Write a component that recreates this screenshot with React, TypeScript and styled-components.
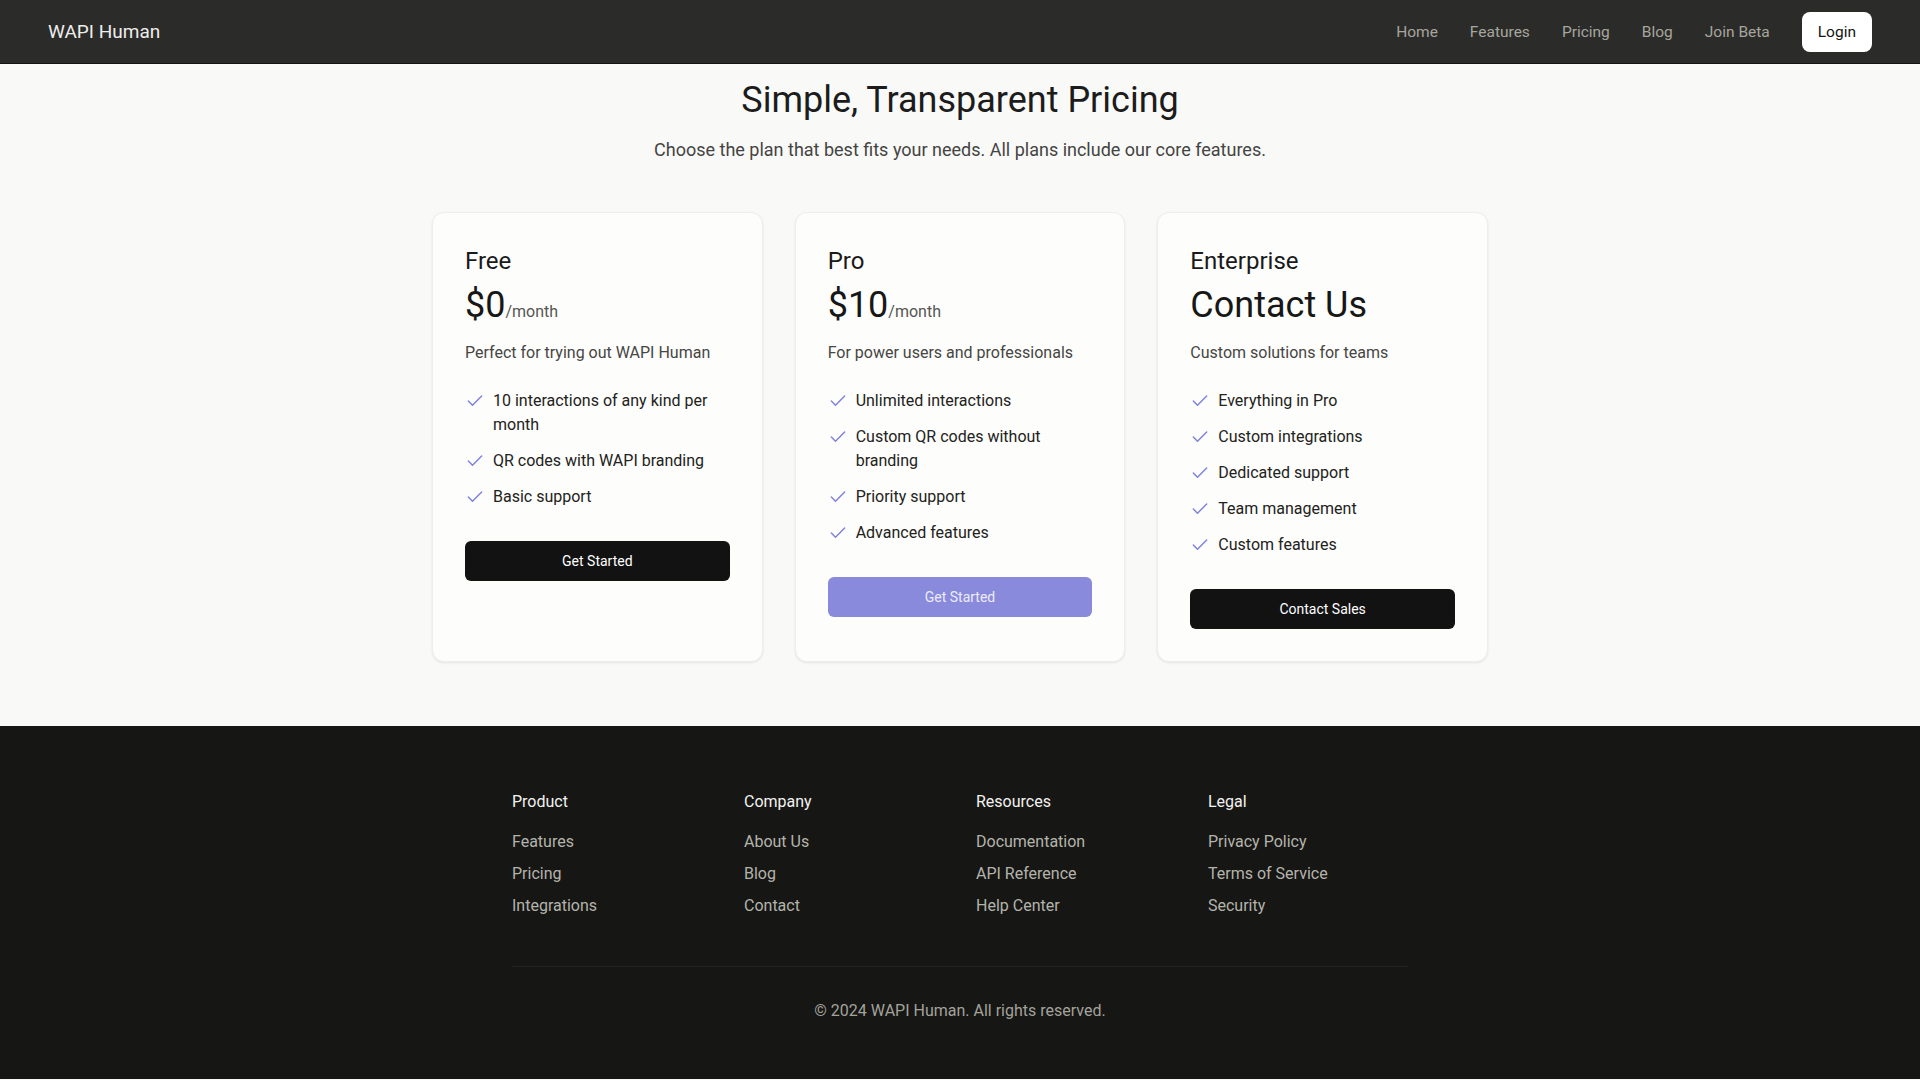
import React from "react";
import styled, { createGlobalStyle } from "styled-components";
import { Check } from "lucide-react";

const GlobalStyle = createGlobalStyle`
  * { box-sizing: border-box; }
  html, body { margin: 0; padding: 0; }
  body {
    background: #f9f9f7;
    font-family: Roboto, "Liberation Sans", Arial, sans-serif;
    color: #1a1a1a;
    -webkit-font-smoothing: antialiased;
  }
`;

const Header = styled.header`
  height: 64px;
  background: #2b2b29;
  border-bottom: 1px solid #141413;
  display: flex;
  align-items: center;
  justify-content: space-between;
  padding: 0 48px;
`;

const Logo = styled.div`
  font-size: 19px;
  color: #ededeb;
`;

const Nav = styled.nav`
  display: flex;
  align-items: center;
  gap: 32px;
`;

const NavLink = styled.a`
  font-size: 15.5px;
  color: #a6a69e;
  text-decoration: none;
`;

const LoginButton = styled.button`
  height: 40px;
  padding: 0 16px;
  border: none;
  border-radius: 8px;
  background: #ffffff;
  color: #141414;
  font-family: inherit;
  font-size: 15.5px;
`;

const Section = styled.section`
  padding: 16px 32px 64px;
`;

const Title = styled.h1`
  margin: 0;
  text-align: center;
  font-size: 36px;
  line-height: 40px;
  font-weight: 400;
  color: #1c1c1c;
`;

const Subtitle = styled.p`
  margin: 16px 0 0;
  text-align: center;
  font-size: 18px;
  line-height: 28px;
  color: #444442;
`;

const Grid = styled.div`
  max-width: 1056px;
  margin: 48px auto 0;
  display: grid;
  grid-template-columns: repeat(3, 1fr);
  gap: 32px;
`;

const Card = styled.div`
  background: #fdfdfb;
  border: 1px solid #eeeeea;
  border-radius: 12px;
  box-shadow: 0 1px 3px rgba(0, 0, 0, 0.06), 0 1px 2px rgba(0, 0, 0, 0.03);
  padding: 32px;
  display: flex;
  flex-direction: column;
`;

const PlanName = styled.h3`
  margin: 0;
  font-size: 24px;
  line-height: 32px;
  font-weight: 400;
  color: #1a1a1a;
`;

const PriceRow = styled.div`
  margin-top: 8px;
  display: flex;
  align-items: baseline;
  height: 40px;
`;

const Price = styled.span`
  font-size: 36px;
  line-height: 40px;
  color: #171717;
`;

const Per = styled.span`
  font-size: 16px;
  color: #555553;
`;

const Description = styled.p`
  margin: 16px 0 0;
  font-size: 16px;
  line-height: 24px;
  color: #464644;
`;

const FeatureList = styled.ul`
  list-style: none;
  margin: 24px 0 32px;
  padding: 0;
  display: flex;
  flex-direction: column;
  gap: 12px;
`;

const Feature = styled.li`
  display: flex;
  align-items: flex-start;
  gap: 8px;
  font-size: 16px;
  line-height: 24px;
  color: #222220;

  svg {
    flex-shrink: 0;
    margin-top: 2px;
    color: #8080e0;
  }
`;

const PlanButton = styled.button<{ $accent?: boolean }>`
  height: 40px;
  width: 100%;
  border: none;
  border-radius: 6px;
  background: ${(p) => (p.$accent ? "#8a8adc" : "#121212")};
  color: ${(p) => (p.$accent ? "#ececf8" : "#ffffff")};
  font-family: inherit;
  font-size: 14px;
`;

const Footer = styled.footer`
  background: #161614;
  padding: 64px 32px 56px;
`;

const FooterInner = styled.div`
  max-width: 896px;
  margin: 0 auto;
`;

const FooterGrid = styled.div`
  display: grid;
  grid-template-columns: repeat(4, 1fr);
  gap: 32px;
`;

const FooterCol = styled.div`
  display: flex;
  flex-direction: column;
`;

const FooterHeading = styled.h4`
  margin: 0 0 16px;
  font-size: 16px;
  line-height: 24px;
  font-weight: 400;
  color: #f2f2f0;
`;

const FooterLinks = styled.div`
  display: flex;
  flex-direction: column;
  gap: 8px;
`;

const FooterLink = styled.a`
  font-size: 16px;
  line-height: 24px;
  color: #b4b4ac;
  text-decoration: none;
`;

const Bottom = styled.div`
  margin-top: 48px;
  border-top: 1px solid #232321;
  padding-top: 32px;
  text-align: center;
  font-size: 16px;
  line-height: 24px;
  color: #a3a39c;
`;

type Plan = {
  name: string;
  price: string;
  per?: string;
  description: string;
  features: string[];
  cta: string;
  accent?: boolean;
};

const plans: Plan[] = [
  {
    name: "Free",
    price: "$0",
    per: "/month",
    description: "Perfect for trying out WAPI Human",
    features: [
      "10 interactions of any kind per month",
      "QR codes with WAPI branding",
      "Basic support",
    ],
    cta: "Get Started",
  },
  {
    name: "Pro",
    price: "$10",
    per: "/month",
    description: "For power users and professionals",
    features: [
      "Unlimited interactions",
      "Custom QR codes without branding",
      "Priority support",
      "Advanced features",
    ],
    cta: "Get Started",
    accent: true,
  },
  {
    name: "Enterprise",
    price: "Contact Us",
    description: "Custom solutions for teams",
    features: [
      "Everything in Pro",
      "Custom integrations",
      "Dedicated support",
      "Team management",
      "Custom features",
    ],
    cta: "Contact Sales",
  },
];

const footerCols = [
  { title: "Product", links: ["Features", "Pricing", "Integrations"] },
  { title: "Company", links: ["About Us", "Blog", "Contact"] },
  { title: "Resources", links: ["Documentation", "API Reference", "Help Center"] },
  { title: "Legal", links: ["Privacy Policy", "Terms of Service", "Security"] },
];

export default function App() {
  return (
    <>
      <GlobalStyle />
      <Header>
        <Logo>WAPI Human</Logo>
        <Nav>
          {["Home", "Features", "Pricing", "Blog", "Join Beta"].map((l) => (
            <NavLink key={l} href="#">
              {l}
            </NavLink>
          ))}
          <LoginButton>Login</LoginButton>
        </Nav>
      </Header>
      <Section>
        <Title>Simple, Transparent Pricing</Title>
        <Subtitle>
          Choose the plan that best fits your needs. All plans include our core features.
        </Subtitle>
        <Grid>
          {plans.map((p) => (
            <Card key={p.name}>
              <PlanName>{p.name}</PlanName>
              <PriceRow>
                <Price>{p.price}</Price>
                {p.per && <Per>{p.per}</Per>}
              </PriceRow>
              <Description>{p.description}</Description>
              <FeatureList>
                {p.features.map((f) => (
                  <Feature key={f}>
                    <Check size={20} strokeWidth={1.75} />
                    <span>{f}</span>
                  </Feature>
                ))}
              </FeatureList>
              <PlanButton $accent={p.accent}>{p.cta}</PlanButton>
            </Card>
          ))}
        </Grid>
      </Section>
      <Footer>
        <FooterInner>
          <FooterGrid>
            {footerCols.map((c) => (
              <FooterCol key={c.title}>
                <FooterHeading>{c.title}</FooterHeading>
                <FooterLinks>
                  {c.links.map((l) => (
                    <FooterLink key={l} href="#">
                      {l}
                    </FooterLink>
                  ))}
                </FooterLinks>
              </FooterCol>
            ))}
          </FooterGrid>
          <Bottom>© 2024 WAPI Human. All rights reserved.</Bottom>
        </FooterInner>
      </Footer>
    </>
  );
}
